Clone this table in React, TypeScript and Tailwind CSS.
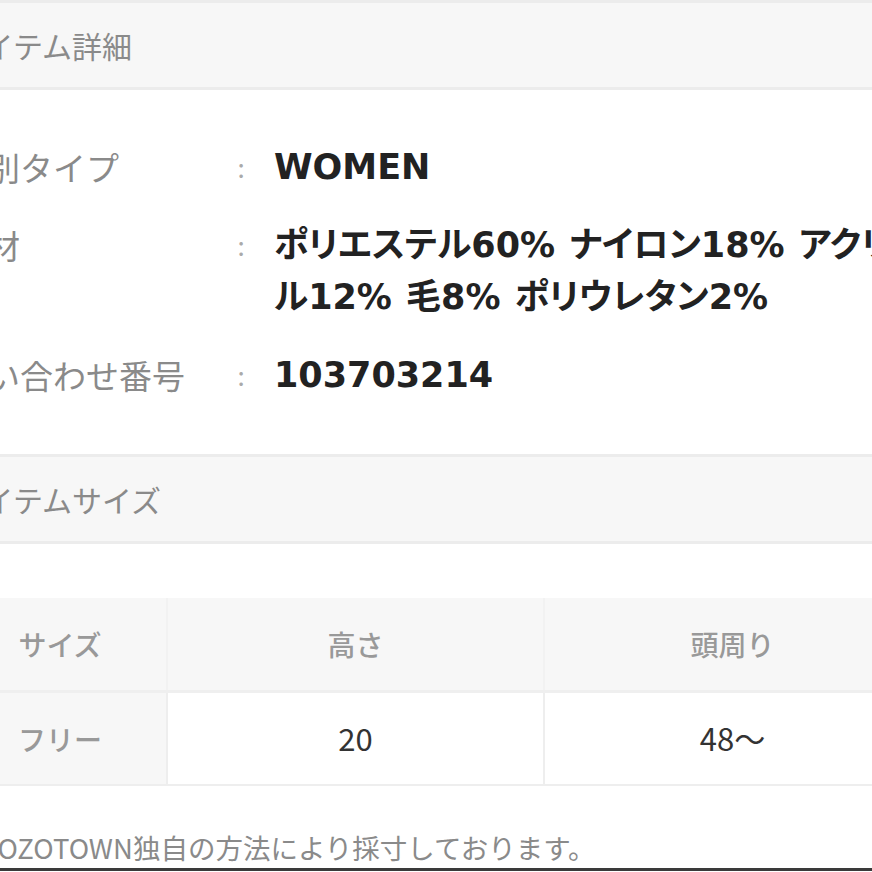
const jp = "font-['Noto_Sans_CJK_JP','Noto_Sans',sans-serif]";

type Spec = { label: string; lines: string[] };

const specs: Spec[] = [
  { label: "性別タイプ", lines: ["WOMEN"] },
  { label: "素材", lines: ["ポリエステル60% ナイロン18% アクリ", "ル12% 毛8% ポリウレタン2%"] },
  { label: "問い合わせ番号", lines: ["103703214"] },
];

function SectionTitle({ title }: { title: string }) {
  return (
    <div className="border-t-[3px] border-b-[3px] border-[#ececec] bg-[#f7f7f7] h-[90px] flex items-center pl-[1px]">
      <h2 className="text-[30px] text-[#8a8a8a]">{title}</h2>
    </div>
  );
}

export default function App() {
  return (
    <div className={`w-[872px] h-[872px] overflow-hidden bg-white ${jp}`}>
      <div className="-ml-[46px] w-[968px] flex flex-col">
        <SectionTitle title="アイテム詳細" />

        <div className="pt-[51px] pb-[53px] flex flex-col gap-[26px]">
          {specs.map((s) => (
            <div key={s.label} className="flex leading-[52px]">
              <div className="w-[270px] shrink-0 text-[33px] text-[#8a8a8a]">{s.label}</div>
              <div className="w-[34px] shrink-0 text-center text-[26px] text-[#aaa]">:</div>
              <div className="pl-[16px] text-[35px] font-bold text-[#222] [word-spacing:2px] font-['DejaVu_Sans','Noto_Sans_CJK_JP',sans-serif] [font-feature-settings:'palt']">
                {s.lines.map((l) => (
                  <div key={l} className="whitespace-nowrap">
                    {l}
                  </div>
                ))}
              </div>
            </div>
          ))}
        </div>

        <SectionTitle title="アイテムサイズ" />

        <div className="mt-[54px] flex flex-col">
          <div className="flex h-[95px] bg-[#f7f7f7] border-b-[3px] border-[#efefef] text-[28px] font-medium text-[#999]">
            <div className="w-[212px] flex items-center justify-center">サイズ</div>
            <div className="w-[377px] flex items-center justify-center border-l-2 border-[#f2f2f2]">高さ</div>
            <div className="w-[377px] flex items-center justify-center border-l-2 border-[#f2f2f2]">頭周り</div>
          </div>
          <div className="flex h-[93px] border-b-2 border-[#eeeeee]">
            <div className="w-[212px] flex items-center justify-center bg-[#f7f7f7] text-[28px] font-medium text-[#999]">
              フリー
            </div>
            <div className="w-[377px] flex items-center justify-center border-l-2 border-[#eeeeee] text-[31px] text-[#333]">
              20
            </div>
            <div className="w-[377px] flex items-center justify-center border-l-2 border-[#eeeeee] text-[31px] text-[#333]">
              48〜
            </div>
          </div>
        </div>

        <p className="mt-[43px] text-[27.5px] leading-[36px] text-[#8a8a8a] whitespace-nowrap">
          ※ZOZOTOWN独自の方法により採寸しております。
        </p>
        <div className="mt-[3px] h-[3px] bg-[#3a3a3a]" />
      </div>
    </div>
  );
}
